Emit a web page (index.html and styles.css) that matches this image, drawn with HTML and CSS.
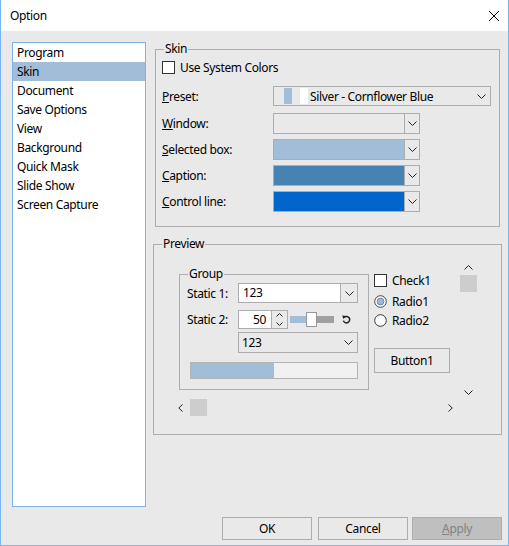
FILE: index.html
```html
<!DOCTYPE html>
<html lang="en">
<head>
  <meta charset="UTF-8">
  <title>Option</title>
  <link rel="stylesheet" href="styles.css">
</head>
<body>
<div class="window">
  <div class="titlebar">
    <span class="title">Option</span>
    <svg class="close" width="10" height="10" viewBox="0 0 10 10">
      <path d="M0 0 L10 10 M10 0 L0 10" stroke="#000" stroke-width="1" fill="none"/>
    </svg>
  </div>

  <div class="dialog">
    <div class="main">
      <ul class="pages">
        <li>Program</li>
        <li class="selected">Skin</li>
        <li>Document</li>
        <li>Save Options</li>
        <li>View</li>
        <li>Background</li>
        <li>Quick Mask</li>
        <li>Slide Show</li>
        <li>Screen Capture</li>
      </ul>

      <div class="panel">
        <!-- Skin settings -->
        <div class="group skin">
          <span class="group-title">Skin</span>
          <div class="check-row">
            <span class="checkbox"></span>
            <span class="check-text">Use System Colors</span>
          </div>

          <div class="field preset-row">
            <span class="field-label"><u>P</u>reset:</span>
            <div class="combo preset">
              <span class="mini-swatch blue"></span>
              <span class="mini-swatch white"></span>
              <span class="preset-text">Silver - Cornflower Blue</span>
              <svg class="chev" width="9" height="5" viewBox="0 0 9 5"><polyline points="0.5,0.5 4.5,4.5 8.5,0.5" fill="none" stroke="#222"/></svg>
            </div>
          </div>

          <div class="field color-row first">
            <span class="field-label"><u>W</u>indow:</span>
            <div class="combo color">
              <span class="swatch"></span>
              <span class="drop"><svg width="9" height="5" viewBox="0 0 9 5"><polyline points="0.5,0.5 4.5,4.5 8.5,0.5" fill="none" stroke="#222"/></svg></span>
            </div>
          </div>

          <div class="field color-row">
            <span class="field-label"><u>S</u>elected box:</span>
            <div class="combo color">
              <span class="swatch" style="background:#a2bdd8"></span>
              <span class="drop"><svg width="9" height="5" viewBox="0 0 9 5"><polyline points="0.5,0.5 4.5,4.5 8.5,0.5" fill="none" stroke="#222"/></svg></span>
            </div>
          </div>

          <div class="field color-row">
            <span class="field-label"><u>C</u>aption:</span>
            <div class="combo color">
              <span class="swatch" style="background:#4682b4"></span>
              <span class="drop"><svg width="9" height="5" viewBox="0 0 9 5"><polyline points="0.5,0.5 4.5,4.5 8.5,0.5" fill="none" stroke="#222"/></svg></span>
            </div>
          </div>

          <div class="field color-row">
            <span class="field-label"><u>C</u>ontrol line:</span>
            <div class="combo color">
              <span class="swatch" style="background:#0066cc"></span>
              <span class="drop"><svg width="9" height="5" viewBox="0 0 9 5"><polyline points="0.5,0.5 4.5,4.5 8.5,0.5" fill="none" stroke="#222"/></svg></span>
            </div>
          </div>
        </div>

        <!-- Preview of the skin -->
        <div class="group preview">
          <span class="group-title">Preview</span>
          <div class="pv">
            <div class="pane">
              <div class="pane-row">
                <div class="group inner-group">
                  <span class="group-title">Group</span>

                  <div class="pf-row">
                    <span class="pf-label">Static 1:</span>
                    <div class="combo edit-combo">
                      <span class="edit-part">123</span>
                      <span class="drop"><svg width="9" height="5" viewBox="0 0 9 5"><polyline points="0.5,0.5 4.5,4.5 8.5,0.5" fill="none" stroke="#222"/></svg></span>
                    </div>
                  </div>

                  <div class="pf-row second">
                    <span class="pf-label">Static 2:</span>
                    <span class="num-edit">50</span>
                    <span class="spin">
                      <svg width="7" height="4" viewBox="0 0 7 4"><polyline points="0.5,3.5 3.5,0.5 6.5,3.5" fill="none" stroke="#222"/></svg>
                      <svg width="7" height="4" viewBox="0 0 7 4"><polyline points="0.5,0.5 3.5,3.5 6.5,0.5" fill="none" stroke="#222"/></svg>
                    </span>
                    <span class="slider">
                      <span class="track-done"></span>
                      <span class="thumb"></span>
                      <span class="track-rest"></span>
                    </span>
                    <svg class="reset" width="9" height="9" viewBox="0 0 9 9">
                      <path d="M2.2 2.4 A3.2 3.2 0 1 1 1.4 5.6" fill="none" stroke="#222" stroke-width="1.5"/>
                      <path d="M0.3 0.5 L4.2 1.1 L1.3 4.1 Z" fill="#222"/>
                    </svg>
                  </div>

                  <div class="combo plain-combo">
                    <span class="plain-text">123</span>
                    <svg class="chev" width="9" height="5" viewBox="0 0 9 5"><polyline points="0.5,0.5 4.5,4.5 8.5,0.5" fill="none" stroke="#222"/></svg>
                  </div>

                  <div class="progress"><span class="progress-fill" style="width:83px"></span></div>
                </div>

                <div class="controls">
                  <div class="opt">
                    <span class="checkbox"></span>
                    <span class="opt-text">Check1</span>
                  </div>
                  <div class="opt radio-1">
                    <svg width="13" height="13" viewBox="0 0 13 13">
                      <circle cx="6.5" cy="6.5" r="5.8" fill="#fff" stroke="#444"/>
                      <circle cx="6.5" cy="6.5" r="3.4" fill="#9db8d6" stroke="#5d7c9e" stroke-width="0.8"/>
                    </svg>
                    <span class="opt-text">Radio1</span>
                  </div>
                  <div class="opt radio-2">
                    <svg width="13" height="13" viewBox="0 0 13 13">
                      <circle cx="6.5" cy="6.5" r="5.8" fill="#fff" stroke="#333"/>
                    </svg>
                    <span class="opt-text">Radio2</span>
                  </div>
                  <button class="btn button1">Button1</button>
                </div>
              </div>

              <div class="hscroll">
                <svg width="5" height="8" viewBox="0 0 5 8"><polyline points="4.5,0.5 0.8,4 4.5,7.5" fill="none" stroke="#222"/></svg>
                <span class="scroll-thumb h-thumb"></span>
                <svg class="right-arrow" width="5" height="8" viewBox="0 0 5 8"><polyline points="0.5,0.5 4.2,4 0.5,7.5" fill="none" stroke="#222"/></svg>
              </div>
            </div>

            <div class="vscroll">
              <svg width="9" height="5" viewBox="0 0 9 5"><polyline points="0.5,4.5 4.5,0.5 8.5,4.5" fill="none" stroke="#222"/></svg>
              <span class="scroll-thumb v-thumb"></span>
              <svg class="down-arrow" width="9" height="5" viewBox="0 0 9 5"><polyline points="0.5,0.5 4.5,4.5 8.5,0.5" fill="none" stroke="#222"/></svg>
            </div>
          </div>
        </div>
      </div>
    </div>

    <div class="buttons">
      <button class="btn ok">OK</button>
      <button class="btn cancel">Cancel</button>
      <button class="btn apply" disabled><u>A</u>pply</button>
    </div>
  </div>
</div>
</body>
</html>
```

FILE: styles.css
```css
body {
  margin: 0;
  font-family: "Noto Sans", "Liberation Sans", sans-serif;
  font-size: 12px;
  letter-spacing: -0.35px;
  color: #000;
  background: #fff;
}

.window {
  width: 509px;
  height: 546px;
  box-sizing: border-box;
  border: 1px solid #78b4f0;
  border-top: none;
  background: #e9e9e9;
  overflow: hidden;
}

.titlebar {
  height: 31px;
  background: #fff;
  display: flex;
  align-items: center;
  justify-content: space-between;
  padding: 0 9px;
}

.title {
  line-height: 31px;
}

.dialog {
  padding: 11px 0 0 11px;
}

.main {
  display: flex;
  align-items: flex-start;
}

/* page list on the left */
.pages {
  list-style: none;
  margin: 0;
  padding: 0;
  width: 134px;
  height: 465px;
  box-sizing: border-box;
  border: 1px solid #7ab4ea;
  background: #fff;
}

.pages li {
  line-height: 19px;
  padding-left: 4px;
}

.pages li.selected {
  background: #a2bdd8;
}

.panel {
  margin-left: 9px;
}

/* group boxes */
.group {
  position: relative;
  box-sizing: border-box;
  border: 1px solid #adadad;
}

.group-title {
  position: absolute;
  top: -9px;
  left: 8px;
  padding: 0 1px;
  line-height: 16px;
  background: #e9e9e9;
}

.skin {
  width: 345px;
  height: 178px;
  margin-top: 7px;
  padding: 11px 0 0 6px;
}

.check-row,
.opt {
  display: flex;
  align-items: center;
  height: 13px;
}

.checkbox {
  width: 13px;
  height: 13px;
  box-sizing: border-box;
  border: 1px solid #333;
  background: #fff;
}

.check-text {
  margin-left: 5px;
}

.field {
  display: flex;
  align-items: center;
}

.field-label {
  width: 111px;
}

.preset-row {
  margin-top: 12px;
}

.color-row {
  margin-top: 5px;
}

.color-row.first {
  margin-top: 7px;
}

.combo {
  display: flex;
  align-items: center;
  box-sizing: border-box;
  border: 1px solid #adadad;
}

.preset {
  width: 218px;
  height: 20px;
}

.mini-swatch {
  width: 8px;
  height: 16px;
}

.mini-swatch.blue {
  margin-left: 10px;
  background: #a2bdd8;
}

.mini-swatch.white {
  margin-left: 8px;
  background: #fff;
}

.preset-text {
  margin-left: 2px;
}

.preset .chev {
  margin-left: auto;
  margin-right: 4px;
}

.color {
  width: 147px;
  height: 21px;
  align-items: stretch;
}

.swatch {
  flex: 1;
}

.drop {
  width: 15px;
  box-sizing: border-box;
  border-left: 1px solid #adadad;
  display: flex;
  align-items: center;
  justify-content: center;
}

/* preview */
.preview {
  width: 349px;
  height: 191px;
  margin-top: 17px;
  margin-left: -2px;
}

.pv {
  display: flex;
  padding: 20px 0 0 24px;
}

.pane {
  width: 282px;
}

.pane-row {
  display: flex;
  align-items: flex-start;
}

.inner-group {
  width: 190px;
  height: 116px;
  margin-top: 9px;
  margin-left: 1px;
  padding: 8px 0 0 7px;
}

.pf-row {
  display: flex;
  align-items: center;
}

.pf-row.second {
  margin-top: 7px;
  height: 19px;
}

.pf-label {
  width: 51px;
}

.edit-combo {
  width: 120px;
  height: 20px;
  align-items: stretch;
}

.edit-part {
  flex: 1;
  background: #fff;
  padding-left: 4px;
  line-height: 18px;
}

.edit-combo .drop {
  width: 17px;
}

.num-edit {
  width: 34px;
  height: 19px;
  box-sizing: border-box;
  border: 1px solid #adadad;
  background: #fff;
  text-align: right;
  padding-right: 5px;
  line-height: 17px;
}

.spin {
  width: 16px;
  height: 19px;
  box-sizing: border-box;
  border: 1px solid #adadad;
  border-left: none;
  display: flex;
  flex-direction: column;
  align-items: center;
  justify-content: space-around;
}

.slider {
  display: flex;
  align-items: center;
  margin-left: 2px;
  height: 15px;
}

.track-done {
  width: 16px;
  height: 7px;
  background: #a2bdd8;
}

.thumb {
  width: 11px;
  height: 15px;
  box-sizing: border-box;
  border: 1px solid #999;
  background: #fff;
}

.track-rest {
  width: 17px;
  height: 7px;
  background: #a0a0a0;
}

.reset {
  margin-left: 8px;
}

.plain-combo {
  width: 120px;
  height: 21px;
  margin: 3px 0 0 51px;
}

.plain-text {
  padding-left: 3px;
}

.plain-combo .chev {
  margin-left: auto;
  margin-right: 4px;
}

.progress {
  width: 168px;
  height: 17px;
  box-sizing: border-box;
  margin: 9px 0 0 3px;
  border: 1px solid #b4b4b4;
  background: #f0f0f0;
  display: flex;
}

.progress-fill {
  background: #a2bdd8;
}

.controls {
  margin: 9px 0 0 5px;
}

.opt-text {
  margin-left: 5px;
}

.radio-1 {
  margin-top: 8px;
}

.radio-2 {
  margin-top: 6px;
}

.btn {
  font: inherit;
  letter-spacing: inherit;
  color: #000;
  box-sizing: border-box;
  border: 1px solid #adadad;
  background: #e1e1e1;
  padding: 0;
}

.button1 {
  width: 76px;
  height: 25px;
  margin-top: 21px;
  background: #e9e9e9;
}

.hscroll {
  display: flex;
  align-items: center;
  height: 17px;
  margin-top: 9px;
}

.scroll-thumb {
  width: 17px;
  height: 17px;
  background: #cdcdcd;
}

.h-thumb {
  margin-left: 7px;
}

.right-arrow {
  margin-left: auto;
  margin-right: 7px;
}

.vscroll {
  width: 17px;
  display: flex;
  flex-direction: column;
  align-items: center;
}

.v-thumb {
  margin-top: 5px;
}

.down-arrow {
  margin-top: 98px;
}

/* bottom buttons */
.buttons {
  display: flex;
  justify-content: flex-end;
  margin-top: 10px;
  padding-right: 6px;
}

.buttons .btn {
  width: 90px;
  height: 23px;
  background: #e9e9e9;
}

.ok {
  margin-right: 6px;
}

.cancel {
  margin-right: 4px;
}

.buttons .apply {
  background: #bfbfbf;
  color: #838383;
}
```
